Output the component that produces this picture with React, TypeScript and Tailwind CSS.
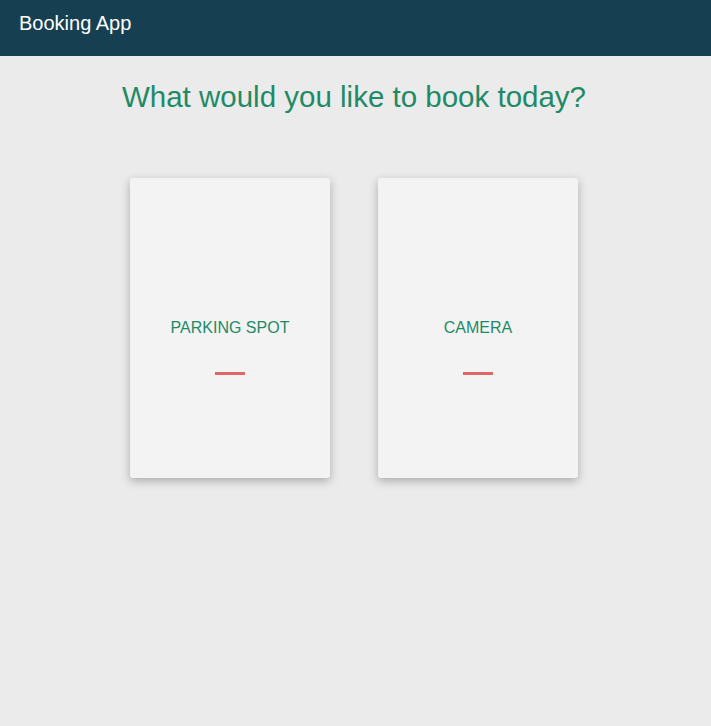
export default function App() {
  const items = ['PARKING SPOT', 'CAMERA'];

  return (
    <div className="min-h-[726px] bg-[#ebebeb] font-['Liberation_Sans',Arial,sans-serif]">
      {/* Top bar */}
      <header className="h-14 bg-[#173f52] px-[19px] pt-[11px]">
        <span className="text-white text-[20px] leading-6">Booking App</span>
      </header>

      <main className="flex flex-col items-center">
        <h1 className="mt-[21px] text-[29.5px] leading-[40px] text-[#1f8a66] pr-[3px]">
          What would you like to book today?
        </h1>

        <div className="mt-[61px] flex gap-12 pr-[3px]">
          {items.map((name) => (
            <div
              key={name}
              className="w-[200px] h-[300px] bg-[#f3f3f3] rounded-[3px] shadow-[0_3px_10px_rgba(0,0,0,0.28)] flex flex-col items-center pt-[140px]"
            >
              <span className="text-[16px] leading-5 text-[#1f8a66]">{name}</span>
              <span className="mt-[34px] w-[30px] h-[3px] bg-[#e06666]" />
            </div>
          ))}
        </div>
      </main>
    </div>
  );
}
